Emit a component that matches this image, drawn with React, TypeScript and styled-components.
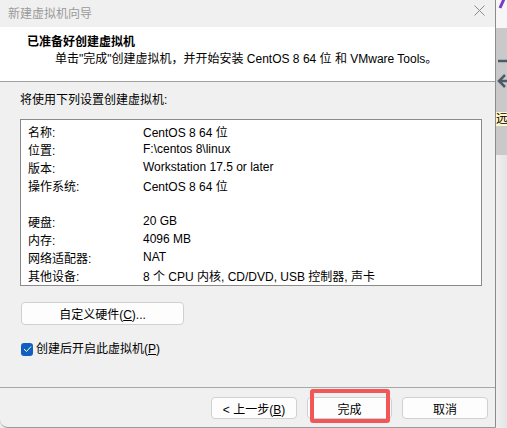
import React from "react";
import styled, { createGlobalStyle } from "styled-components";

const GlobalStyle = createGlobalStyle`
  html, body {
    margin: 0;
    padding: 0;
    background: #ededed;
  }
  body {
    font-family: "Liberation Sans", "Noto Sans CJK SC", sans-serif;
    font-size: 12px;
    color: #000;
  }
`;

const Desktop = styled.div`
  width: 507px;
  height: 428px;
  display: flex;
  overflow: hidden;
`;

const Dialog = styled.div`
  width: 496px;
  height: 428px;
  flex-shrink: 0;
  display: flex;
  flex-direction: column;
  background: #f0f0f0;
  border-right: 1px solid #8c8c8c;
  border-bottom: 1px solid #9a9a9a;
  border-bottom-left-radius: 8px;
  box-sizing: border-box;
  overflow: hidden;
`;

const TitleBar = styled.div`
  height: 27px;
  flex-shrink: 0;
  display: flex;
  align-items: center;
  justify-content: space-between;
  padding: 0 10px 6px 8px;
  box-sizing: border-box;
  background: #f0f0f0;
`;

const TitleText = styled.span`
  color: #9a9a9a;
  font-size: 12px;
  padding-top: 3px;
`;

const Header = styled.div`
  height: 55px;
  flex-shrink: 0;
  box-sizing: border-box;
  background: #fff;
  border-bottom: 1px solid #a0a0a0;
  padding: 7px 0 0 27px;
  line-height: 17px;
`;

const Heading = styled.div`
  font-weight: bold;
`;

const SubText = styled.div`
  padding-left: 28px;
`;

const Body = styled.div`
  flex: 1;
  padding: 9px 13px 0 20px;
  display: flex;
  flex-direction: column;
  align-items: flex-start;
`;

const Intro = styled.div`
  line-height: 18px;
`;

const SummaryBox = styled.div`
  align-self: stretch;
  margin-top: 10px;
  height: 167px;
  box-sizing: border-box;
  background: #fff;
  border: 1px solid #8a8a8a;
  padding: 2px 0 1px 7px;
  display: grid;
  grid-template-columns: 115px 1fr;
  grid-auto-rows: 18px;
  align-items: center;
`;

const Cell = styled.span`
  white-space: nowrap;
`;

const Button = styled.button<{ $width: number }>`
  width: ${(p) => p.$width}px;
  height: 22px;
  padding: 0;
  background: #fdfdfd;
  border: 1px solid #d0d0d0;
  border-radius: 4px;
  font-family: inherit;
  font-size: 12px;
  color: #000;
  box-sizing: border-box;
`;

const HardwareButton = styled(Button)`
  height: 23px;
  margin: 16px 0 0 1px;
`;

const CheckRow = styled.label`
  margin-top: 17px;
  display: flex;
  align-items: center;
  gap: 3px;
  line-height: 14px;
`;

const CheckBox = styled.span`
  width: 12px;
  height: 13px;
  border-radius: 3px;
  background: #1060c0;
  display: flex;
  align-items: center;
  justify-content: center;
  margin-left: 1px;
`;

const Footer = styled.div`
  height: 40px;
  flex-shrink: 0;
  box-sizing: border-box;
  border-top: 1px solid #a8a8a8;
  padding: 9px 7px 0 0;
  display: flex;
  justify-content: flex-end;
  align-items: flex-start;
  gap: 10px;
`;

const Highlighted = styled.div`
  position: relative;
`;

const RedFrame = styled.div`
  position: absolute;
  left: 3px;
  top: -8px;
  width: 80px;
  height: 34px;
  box-sizing: border-box;
  border: 4px solid #f25656;
  border-radius: 3px;
  pointer-events: none;
`;

const SideStrip = styled.div`
  width: 11px;
  flex-shrink: 0;
  display: flex;
  flex-direction: column;
  overflow: hidden;
`;

const StripTop = styled.div`
  height: 28px;
  background: #f6f6f6;
`;

const StripGrey = styled.div`
  height: 127px;
  background: #c9c9c9;
  display: flex;
  flex-direction: column;
  align-items: flex-start;
`;

const StripGlyph = styled.span`
  margin-top: 14px;
  font-size: 12px;
  line-height: 14px;
  background: #fff6cc;
  white-space: nowrap;
`;

const StripRest = styled.div`
  flex: 1;
  background: linear-gradient(to right, #f0f0f0, #e4e4e4);
`;

const rows: [string, string][] = [
  ["名称:", "CentOS 8 64 位"],
  ["位置:", "F:\\centos 8\\linux"],
  ["版本:", "Workstation 17.5 or later"],
  ["操作系统:", "CentOS 8 64 位"],
  ["", ""],
  ["硬盘:", "20 GB"],
  ["内存:", "4096 MB"],
  ["网络适配器:", "NAT"],
  ["其他设备:", "8 个 CPU 内核, CD/DVD, USB 控制器, 声卡"],
];

const App = () => {
  return (
    <>
      <GlobalStyle />
      <Desktop>
        <Dialog>
          <TitleBar>
            <TitleText>新建虚拟机向导</TitleText>
            <svg width="11" height="11" viewBox="0 0 11 11">
              <path d="M0.5 0.5 L10.5 10.5 M10.5 0.5 L0.5 10.5" stroke="#8a8a8a" strokeWidth="1" />
            </svg>
          </TitleBar>

          <Header>
            <Heading>已准备好创建虚拟机</Heading>
            <SubText>单击"完成"创建虚拟机，并开始安装 CentOS 8 64 位 和 VMware Tools。</SubText>
          </Header>

          <Body>
            <Intro>将使用下列设置创建虚拟机:</Intro>
            <SummaryBox>
              {rows.map(([label, value], i) => (
                <React.Fragment key={i}>
                  <Cell>{label}</Cell>
                  <Cell>{value}</Cell>
                </React.Fragment>
              ))}
            </SummaryBox>

            <HardwareButton $width={163}>
              自定义硬件(<u>C</u>)...
            </HardwareButton>

            <CheckRow>
              <CheckBox>
                <svg width="9" height="8" viewBox="0 0 9 8">
                  <path d="M1 4 L3.5 6.5 L8 1.5" fill="none" stroke="#fff" strokeWidth="1" />
                </svg>
              </CheckBox>
              <span>
                创建后开启此虚拟机(<u>P</u>)
              </span>
            </CheckRow>
          </Body>

          <Footer>
            <Button $width={86}>
              &lt; 上一步(<u>B</u>)
            </Button>
            <Highlighted>
              <Button $width={85}>完成</Button>
              <RedFrame />
            </Highlighted>
            <Button $width={86}>取消</Button>
          </Footer>
        </Dialog>

        <SideStrip>
          <StripTop>
            <svg width="11" height="28" viewBox="0 0 11 28">
              <path d="M4 8 L8 -1" stroke="#7a3cc8" strokeWidth="3" />
            </svg>
          </StripTop>
          <StripGrey>
            <svg width="11" height="70" viewBox="0 0 11 70">
              <path d="M2 33 L11 33" stroke="#4d5b68" strokeWidth="2.5" />
              <path d="M9 47 L3 53 L9 59 M3 53 L11 53" fill="none" stroke="#4d5b68" strokeWidth="2.5" />
            </svg>
            <StripGlyph>远</StripGlyph>
          </StripGrey>
          <StripRest />
        </SideStrip>
      </Desktop>
    </>
  );
};

export default App;
